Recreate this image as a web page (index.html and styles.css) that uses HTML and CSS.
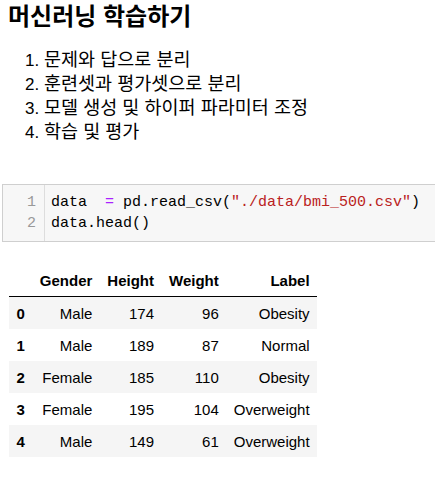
FILE: index.html
```html
<!DOCTYPE html>
<html lang="ko">
<head>
<meta charset="utf-8">
<link rel="stylesheet" href="styles.css">
</head>
<body>
<div class="page">
  <h1 class="title">머신러닝 학습하기</h1>
  <ol class="steps">
    <li>문제와 답으로 분리</li>
    <li>훈련셋과 평가셋으로 분리</li>
    <li>모델 생성 및 하이퍼 파라미터 조정</li>
    <li>학습 및 평가</li>
  </ol>
  <div class="code">
    <div class="gutter"><div>1</div><div>2</div></div>
    <pre class="src">data  <span class="op">=</span> pd.read_csv(<span class="str">"./data/bmi_500.csv"</span>)
data.head()</pre>
  </div>
  <table class="df">
    <thead>
      <tr><th></th><th>Gender</th><th>Height</th><th>Weight</th><th>Label</th></tr>
    </thead>
    <tbody>
      <tr><th>0</th><td>Male</td><td>174</td><td>96</td><td>Obesity</td></tr>
      <tr><th>1</th><td>Male</td><td>189</td><td>87</td><td>Normal</td></tr>
      <tr><th>2</th><td>Female</td><td>185</td><td>110</td><td>Obesity</td></tr>
      <tr><th>3</th><td>Female</td><td>195</td><td>104</td><td>Overweight</td></tr>
      <tr><th>4</th><td>Male</td><td>149</td><td>61</td><td>Overweight</td></tr>
    </tbody>
  </table>
</div>
</body>
</html>
```
FILE: styles.css
```css
html, body {
  margin: 0;
  padding: 0;
  background: #fff;
  overflow: hidden;
}
.page {
  font-family: "Liberation Sans", "Noto Sans CJK KR", sans-serif;
  color: #000;
  padding-top: 3px;
}
.title {
  margin: 0 0 0 8px;
  font-size: 24px;
  line-height: 28px;
  font-weight: bold;
}
.steps {
  margin: 17px 0 0 0;
  padding-left: 44px;
  font-size: 18.5px;
  line-height: 24px;
}
.steps li::marker {
  font-size: 17px;
}
.code {
  display: flex;
  margin: 40px -20px 0 2px;
  border: 1px solid #cfcfcf;
  background: #f7f7f7;
  font-family: "Liberation Mono", "Noto Sans CJK KR", monospace;
  font-size: 15px;
  line-height: 21px;
}
.gutter {
  width: 42px;
  box-sizing: border-box;
  padding: 7px 8px 7px 0;
  text-align: right;
  color: #999;
  border-right: 1px solid #ddd;
}
.src {
  margin: 0;
  padding: 7px 6px;
  font: inherit;
  color: #000;
}
.op { color: #aa22ff; }
.str { color: #ba2121; }
.df {
  margin: 22px 0 0 9px;
  border-collapse: collapse;
  font-size: 15px;
}
.df th, .df td {
  padding: 7.5px 7.5px;
  text-align: right;
  line-height: 17px;
}
.df thead th {
  border-bottom: 1px solid #000;
  font-weight: bold;
}
.df tbody th {
  text-align: left;
}
.df tbody tr:nth-child(odd) {
  background: #f5f5f5;
}
```
